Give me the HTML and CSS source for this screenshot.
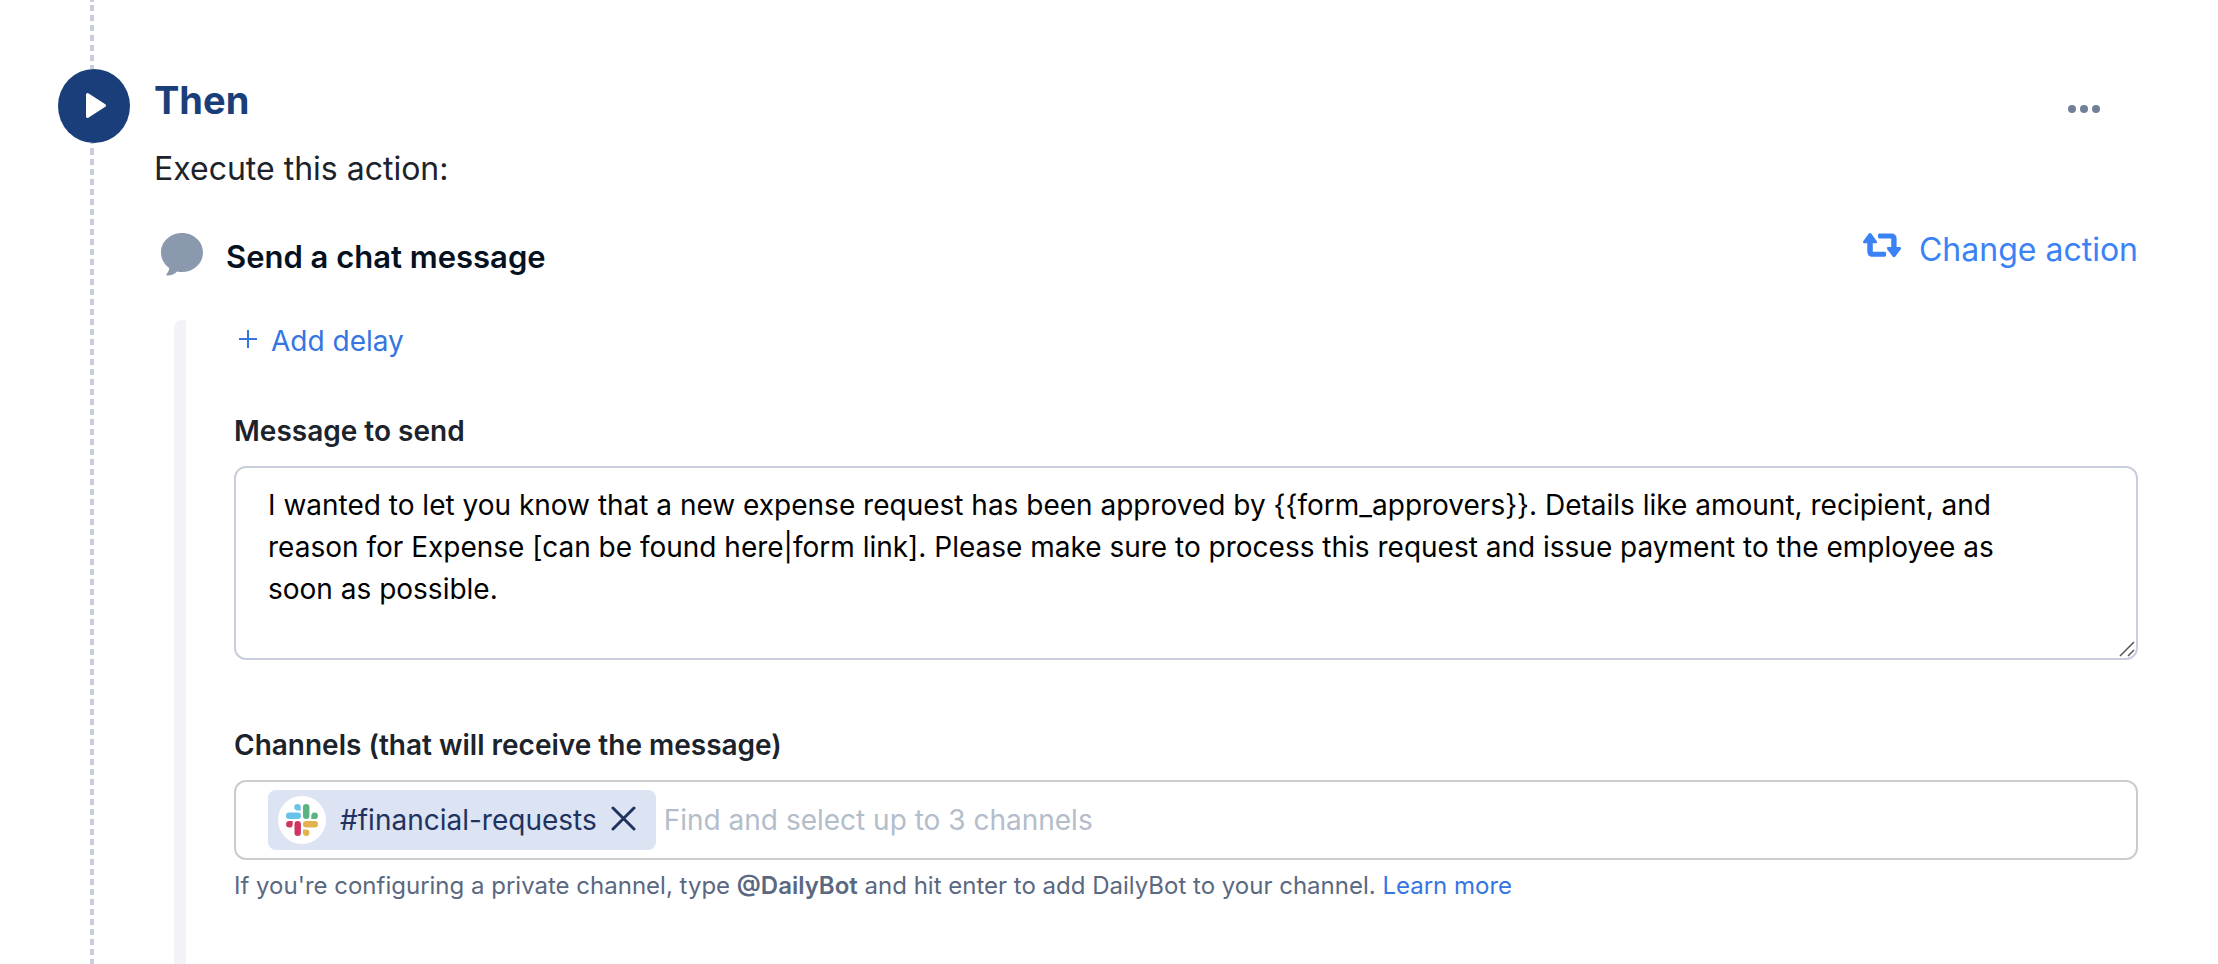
FILE: index.html
```html
<!DOCTYPE html>
<html lang="en">
<head>
<meta charset="utf-8">
<meta name="viewport" content="width=device-width, initial-scale=1">
<title>Workflow action</title>
<link rel="stylesheet" href="styles.css">
</head>
<body>
<main class="step">
  <div class="timeline">
    <span class="dash dash-top"></span>
    <span class="marker">
      <svg width="72" height="74" viewBox="0 0 72 74" aria-hidden="true"><ellipse cx="36" cy="37" rx="36" ry="37" fill="#193e79"/><path d="M29.500 25.500 46.500 36.500 29.500 47.500Z" fill="#fff" stroke="#fff" stroke-width="3" stroke-linejoin="round"/></svg>
    </span>
    <span class="dash dash-bottom"></span>
  </div>
  <section class="content">
    <header class="step-head">
      <h1 class="title">Then</h1>
      <button class="more" type="button" aria-label="More options">
        <svg width="32" height="8" viewBox="0 0 32 8" fill="#718096"><circle cx="4" cy="4" r="4"/><circle cx="16" cy="4" r="4"/><circle cx="28" cy="4" r="4"/></svg>
      </button>
    </header>
    <p class="subtitle">Execute this action:</p>
    <div class="action-row">
      <h2 class="action-name">
        <svg class="chat-icon" width="42" height="43" viewBox="0 0 42 43" aria-hidden="true"><path d="M21 0C32.600 0 42 8.500 42 19.500S32.600 39 21 39c-1.700 0-3.300-.2-4.800-.6C13.500 40.800 10.500 42.500 6.500 42.600c-1.300 0-1.600-.9-.9-1.700 1.700-1.900 2.400-3.700 2.600-6C3.200 31.300 0 25.800 0 19.500 0 8.500 9.400 0 21 0Z" fill="#8b99ae"/></svg>
        Send a chat message
      </h2>
      <button class="change" type="button">
        <svg width="38" height="25" viewBox="0 0 38 25" fill="#3b82f6" aria-hidden="true"><path d="M5.600.8a1.900 1.900 0 0 1 2.800 0l5.200 7.100c1 1.300.4 2.400-1 2.400H9.800v8.400h11.600c1 0 1.700.6 1.700 1.500v1.900c0 1-.7 1.600-1.600 1.600H9a4.600 4.600 0 0 1-4.700-4.600v-8.800H1.400c-1.400 0-1.900-1.100-1-2.400Z"/><path d="M32.400 23.400a1.900 1.900 0 0 1-2.800 0l-5.200-7c-1-1.400-.4-2.500 1-2.500h2.800V5.600H16.600c-1 0-1.600-.6-1.600-1.500V2.200c0-1 .6-1.600 1.600-1.600H29a4.600 4.600 0 0 1 4.600 4.600v8.700h3c1.400 0 1.900 1.100 1 2.500Z"/></svg>
        Change action
      </button>
    </div>
    <div class="action-body">
      <button class="add-delay" type="button">
        <svg width="18" height="18" viewBox="0 0 18 18" fill="none" stroke="#3575e2" stroke-width="2" aria-hidden="true"><path d="M9 0v18M0 9h18"/></svg>
        Add delay
      </button>
      <div class="field">
        <label class="label" for="message">Message to send</label>
        <div class="message-box">
          <textarea class="message" id="message" rows="4" spellcheck="false">I wanted to let you know that a new expense request has been approved by {{form_approvers}}. Details like amount, recipient, and reason for Expense [can be found here|form link]. Please make sure to process this request and issue payment to the employee as soon as possible.</textarea>
          <svg class="grip" width="16" height="16" viewBox="0 0 16 16" fill="none" stroke="#555" stroke-width="1.500" aria-hidden="true"><path d="M1 15 15 1M9 15l6-6"/></svg>
        </div>
      </div>
      <div class="field channels-field">
        <label class="label" for="channels">Channels (that will receive the message)</label>
        <div class="channels">
          <span class="chip">
            <span class="chip-logo">
              <svg width="32" height="32" viewBox="0 0 32 32" aria-hidden="true">
                <g fill="#65c3ec"><path d="M14.700 6.500h-3.200a3.200 3.200 0 1 1 3.200-3.300Z"/><rect y="8.500" width="15" height="6.500" rx="3.200"/></g>
                <g fill="#5bb381"><rect x="17" width="6.400" height="15" rx="3.200"/><path d="M25.300 15v-3.200a3.300 3.300 0 1 1 3.300 3.200Z"/></g>
                <g fill="#d0355f"><path d="M6.700 17v3.200A3.300 3.300 0 1 1 3.400 17Z"/><rect x="8.500" y="17" width="6.400" height="15" rx="3.200"/></g>
                <g fill="#e3b24c"><rect x="17" y="17" width="15" height="6.500" rx="3.200"/><path d="M17 25.500h3.200a3.200 3.200 0 1 1-3.200 3.300Z"/></g>
              </svg>
            </span>
            #financial-requests
            <button class="chip-remove" type="button" aria-label="Remove #financial-requests">
              <svg width="25" height="25" viewBox="0 0 25 25" fill="none" stroke="#20325f" stroke-width="3" stroke-linecap="round"><path d="m2 2 21 21M23 2 2 23"/></svg>
            </button>
          </span>
          <input class="channel-input" id="channels" type="text" placeholder="Find and select up to 3 channels">
        </div>
        <p class="help">If you're configuring a private channel, type <strong>@DailyBot</strong> and hit enter to add DailyBot to your channel. <a class="link" href="#">Learn more</a></p>
      </div>
    </div>
  </section>
</main>
</body>
</html>
```
FILE: styles.css
```css
* { box-sizing: border-box; }
body {
  margin: 0;
  background: #fff;
  color: #1c232b;
  font-family: Inter, "Liberation Sans", sans-serif;
}
h1, h2, p { margin: 0; }
svg { display: block; flex: none; }
button {
  padding: 0;
  border: 0;
  background: none;
  font: inherit;
  cursor: pointer;
}
.step {
  display: flex;
  min-height: 100vh;
  padding-right: 80px;
}
.timeline {
  display: flex;
  flex: none;
  flex-direction: column;
  width: 154px;
  padding-left: 58px;
}
.dash {
  width: 4px;
  margin-left: 32px;
  background: repeating-linear-gradient(to bottom, #c8cedb 0 6px, transparent 6px 10px);
}
.dash-top { height: 69px; background-position: 0 5px; }
.dash-bottom { flex: 1; background-position: 0 6px; }
.content {
  display: flex;
  flex: 1;
  flex-direction: column;
  min-width: 0;
  padding-top: 76px;
}
.step-head {
  display: flex;
  align-items: center;
  justify-content: space-between;
}
.title {
  color: #193e79;
  font-size: 38px;
  font-weight: 700;
  line-height: 48px;
}
.more { padding: 18px 38px 0 0; }
.subtitle {
  margin-top: 25px;
  font-size: 32px;
  line-height: 40px;
}
.action-row {
  display: flex;
  align-items: flex-start;
  justify-content: space-between;
  margin-top: 41px;
}
.action-name {
  display: flex;
  gap: 23px;
  padding: 7px 0 0 7px;
  color: #06111f;
  font-size: 31px;
  font-weight: 600;
  line-height: 40px;
}
.chat-icon { margin-top: -4px; }
.change {
  display: flex;
  gap: 18px;
  color: #3b82f6;
  font-size: 32px;
  line-height: 40px;
}
.change svg { margin-top: 3px; }
.action-body {
  flex: 1;
  margin: 43px 0 0 20px;
  padding-left: 48px;
  border-left: 12px solid #f2f3f8;
  border-top-left-radius: 8px;
}
.add-delay {
  display: flex;
  align-items: center;
  gap: 14px;
  padding-left: 5px;
  color: #3575e2;
  font-size: 28px;
  line-height: 42px;
}
.add-delay svg { margin-bottom: 4px; }
.field { margin-top: 48px; }
.channels-field { margin-top: 64px; }
.label {
  display: block;
  margin-bottom: 14px;
  font-size: 28px;
  font-weight: 600;
  line-height: 42px;
}
.message-box { position: relative; }
.message {
  display: block;
  width: 100%;
  padding: 16px 96px 6px 32px;
  border: 2px solid #c8cedb;
  border-radius: 12px;
  color: #000;
  font: 400 28px/42px Inter, "Liberation Sans", sans-serif;
  resize: vertical;
}
.message::-webkit-resizer { background: transparent; }
.grip {
  position: absolute;
  right: 3px;
  bottom: 3px;
  pointer-events: none;
}
.channels {
  display: flex;
  align-items: center;
  gap: 8px;
  height: 80px;
  padding: 0 32px;
  border: 2px solid #ccc;
  border-radius: 12px;
}
.chip {
  display: flex;
  align-items: center;
  height: 60px;
  padding: 0 20px 0 10px;
  border-radius: 8px;
  background: #dce3f3;
  color: #20325f;
  font-size: 28px;
  white-space: nowrap;
}
.chip-logo {
  display: flex;
  align-items: center;
  justify-content: center;
  width: 48px;
  height: 48px;
  margin-right: 14px;
  border-radius: 50%;
  background: #fff;
}
.chip-remove { margin: 0 0 4px 14px; }
.channel-input {
  flex: 1;
  min-width: 0;
  padding: 0;
  border: 0;
  outline: 0;
  color: #000;
  font: 400 28px/42px Inter, "Liberation Sans", sans-serif;
}
.channel-input::placeholder { color: #b4bdca; opacity: 1; }
.help {
  margin-top: 8px;
  color: #5a6880;
  font-size: 24px;
  line-height: 36px;
}
.help strong { font-weight: 600; }
.link { color: #3575e2; text-decoration: none; }
```
